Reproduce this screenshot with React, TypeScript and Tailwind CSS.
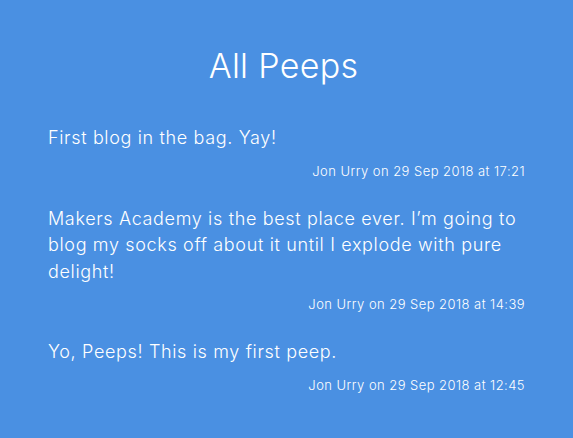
const peeps = [
  { body: "First blog in the bag. Yay!", meta: "Jon Urry on 29 Sep 2018 at 17:21" },
  {
    body: "Makers Academy is the best place ever. I\u2019m going to blog my socks off about it until I explode with pure delight!",
    meta: "Jon Urry on 29 Sep 2018 at 14:39",
  },
  { body: "Yo, Peeps! This is my first peep.", meta: "Jon Urry on 29 Sep 2018 at 12:45" },
];

export default function App() {
  return (
    <div className="min-h-screen w-full bg-[#4a90e2] text-white font-['Inter',sans-serif]">
      <div className="px-[48px] pt-[42px] pb-[40px]">
        <h1 className="pr-[6px] text-center text-[34px] font-light leading-[48px] tracking-[0.3px]">All Peeps</h1>
        <ul className="mt-[35px] flex flex-col gap-[26px]">
          {peeps.map((p, i) => (
            <li key={i} className="flex flex-col">
              <p className="text-[18px] font-light leading-[26.5px] tracking-[0.65px]">{p.body}</p>
              <span className="mt-[10px] self-end text-[13px] font-light leading-[18px] tracking-[0.45px]">
                {p.meta}
              </span>
            </li>
          ))}
        </ul>
      </div>
    </div>
  );
}
